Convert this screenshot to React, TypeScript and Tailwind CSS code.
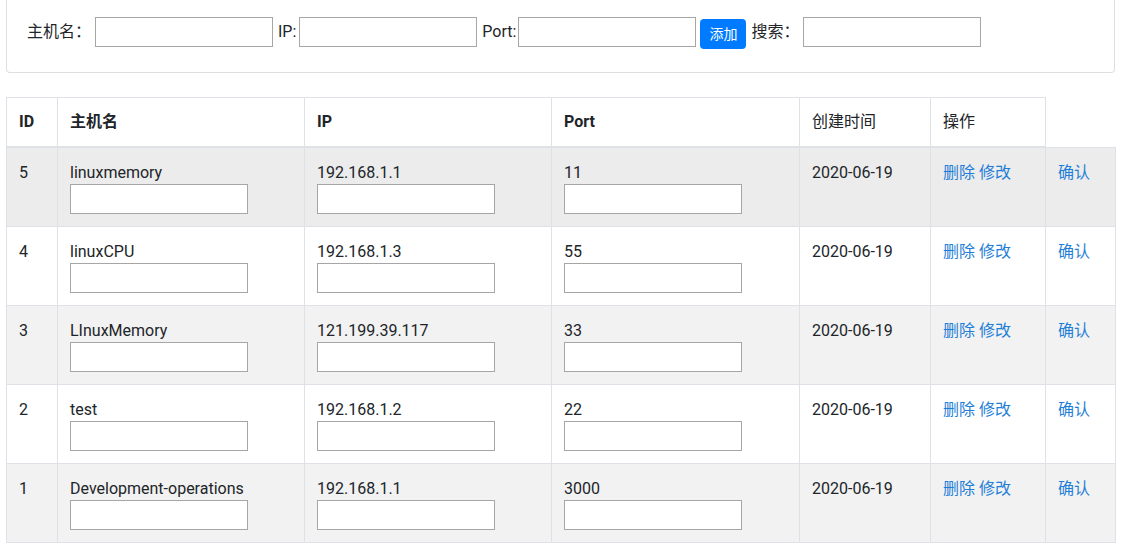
import { type ReactNode } from 'react'

interface Host {
  id: number
  name: string
  ip: string
  port: string
  created: string
}

const hosts: Host[] = [
  { id: 5, name: 'linuxmemory', ip: '192.168.1.1', port: '11', created: '2020-06-19' },
  { id: 4, name: 'linuxCPU', ip: '192.168.1.3', port: '55', created: '2020-06-19' },
  { id: 3, name: 'LInuxMemory', ip: '121.199.39.117', port: '33', created: '2020-06-19' },
  { id: 2, name: 'test', ip: '192.168.1.2', port: '22', created: '2020-06-19' },
  { id: 1, name: 'Development-operations', ip: '192.168.1.1', port: '3000', created: '2020-06-19' },
]

const rowBg = ['bg-[#ececec]', 'bg-white', 'bg-[#f2f2f2]', 'bg-white', 'bg-[#f2f2f2]']

function TextBox({ className = '' }: { className?: string }) {
  return (
    <input
      type="text"
      className={`block h-[30px] w-[178px] border border-[#a6a6a6] bg-white px-1 outline-none ${className}`}
    />
  )
}

function Cell({ children }: { children?: ReactNode }) {
  return <td className="border border-[#dee2e6] px-3 pt-[13px] pb-3 align-top leading-6">{children}</td>
}

export default function App() {
  return (
    <div
      className="min-h-screen bg-white pl-[6px] pr-3 text-[16px] text-[#212529]"
      style={{ fontFamily: 'Roboto, "Noto Sans CJK SC", sans-serif' }}
    >
      <div className="flex h-[73px] w-[1109px] items-start rounded-b border-x border-b border-[#dfdfdf] pt-[17px] pl-5">
        <span className="mt-[3px] mr-1 leading-6">主机名：</span>
        <TextBox />
        <span className="mt-[3px] ml-[5px] mr-[3px] leading-6">IP:</span>
        <TextBox />
        <span className="mt-[3px] ml-[5px] mr-[2px] leading-6">Port:</span>
        <TextBox />
        <button className="mt-[2px] ml-1 h-[30px] w-[46px] rounded bg-[#007bff] text-[14px] text-white">
          添加
        </button>
        <span className="mt-[3px] ml-[5px] mr-1 leading-6">搜索：</span>
        <TextBox />
      </div>

      <table className="mt-6 w-[1109px] table-fixed border-collapse">
        <colgroup>
          <col className="w-[51px]" />
          <col className="w-[247px]" />
          <col className="w-[247px]" />
          <col className="w-[248px]" />
          <col className="w-[131px]" />
          <col className="w-[115px]" />
          <col className="w-[70px]" />
        </colgroup>
        <thead>
          <tr>
            <th className="border border-b-2 border-[#dee2e6] p-3 text-left align-bottom leading-6 font-bold">ID</th>
            <th className="border border-b-2 border-[#dee2e6] p-3 text-left align-bottom leading-6 font-bold">主机名</th>
            <th className="border border-b-2 border-[#dee2e6] p-3 text-left align-bottom leading-6 font-bold">IP</th>
            <th className="border border-b-2 border-[#dee2e6] p-3 text-left align-bottom leading-6 font-bold">Port</th>
            <th className="border border-b-2 border-[#dee2e6] p-3 text-left align-bottom leading-6 font-normal">创建时间</th>
            <th className="border border-b-2 border-[#dee2e6] p-3 text-left align-bottom leading-6 font-normal">操作</th>
          </tr>
        </thead>
        <tbody>
          {hosts.map((h, i) => (
            <tr key={h.id} className={rowBg[i]}>
              <Cell>{h.id}</Cell>
              <Cell>
                {h.name}
                <TextBox className="-mt-px" />
              </Cell>
              <Cell>
                {h.ip}
                <TextBox className="-mt-px" />
              </Cell>
              <Cell>
                {h.port}
                <TextBox className="-mt-px" />
              </Cell>
              <Cell>{h.created}</Cell>
              <Cell>
                <a href="#" className="text-[#1f7fd8]">删除</a>{' '}
                <a href="#" className="text-[#1f7fd8]">修改</a>
              </Cell>
              <Cell>
                <a href="#" className="text-[#1f7fd8]">确认</a>
              </Cell>
            </tr>
          ))}
        </tbody>
      </table>
    </div>
  )
}
